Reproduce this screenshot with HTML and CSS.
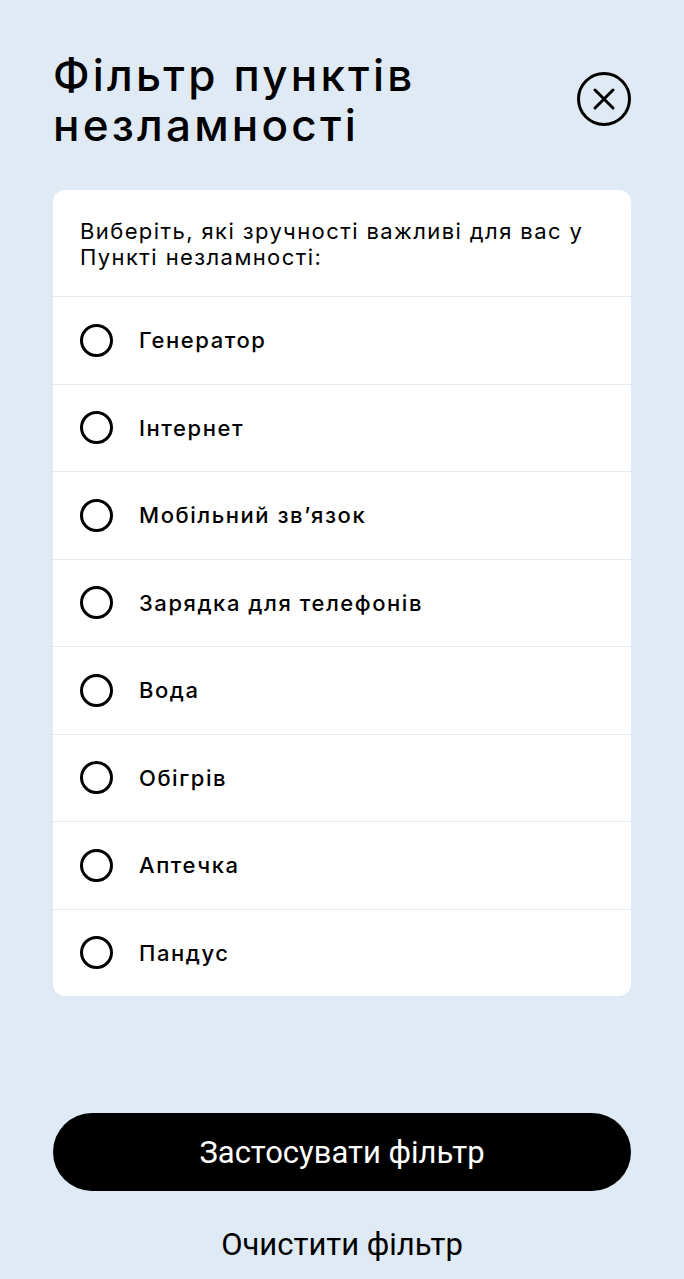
FILE: index.html
```html
<!DOCTYPE html>
<html lang="uk">
<head>
<meta charset="utf-8">
<title>Фільтр пунктів незламності</title>
<link rel="stylesheet" href="styles.css">
</head>
<body>
<div class="page">
  <header class="header">
    <h1 class="title">Фільтр пунктів незламності</h1>
    <button class="close" aria-label="Закрити">
      <svg width="54" height="54" viewBox="0 0 54 54" fill="none" stroke="#000" stroke-width="3" stroke-linecap="round">
        <circle cx="27" cy="27" r="25.5"/>
        <path d="M18 18 L36 36 M36 18 L18 36"/>
      </svg>
    </button>
  </header>

  <section class="card">
    <p class="intro">Виберіть, які зручності важливі для вас у Пункті незламності:</p>
    <ul class="options">
      <li class="option"><span class="radio"></span><span class="label">Генератор</span></li>
      <li class="option"><span class="radio"></span><span class="label">Інтернет</span></li>
      <li class="option"><span class="radio"></span><span class="label">Мобільний зв’язок</span></li>
      <li class="option"><span class="radio"></span><span class="label">Зарядка для телефонів</span></li>
      <li class="option"><span class="radio"></span><span class="label">Вода</span></li>
      <li class="option"><span class="radio"></span><span class="label">Обігрів</span></li>
      <li class="option"><span class="radio"></span><span class="label">Аптечка</span></li>
      <li class="option"><span class="radio"></span><span class="label">Пандус</span></li>
    </ul>
  </section>

  <footer class="footer">
    <button class="apply">Застосувати фільтр</button>
    <button class="clear">Очистити фільтр</button>
  </footer>
</div>
</body>
</html>
```

FILE: styles.css
```css
* { box-sizing: border-box; }
html, body {
  margin: 0;
  padding: 0;
  background: #dfeaf5;
}
body {
  font-family: Inter, "Noto Sans", "Liberation Sans", sans-serif;
  color: #000;
}
.page {
  min-height: 1279px;
  display: flex;
  flex-direction: column;
  padding: 0 53px;
}
.header {
  display: flex;
  align-items: flex-start;
  justify-content: space-between;
  padding-top: 50px;
}
.title {
  margin: 0;
  font-size: 44px;
  line-height: 50px;
  font-weight: 500;
  letter-spacing: 3.2px;
  width: 430px;
}
.close {
  margin: 22px 0 0 0;
  padding: 0;
  border: 0;
  background: none;
  width: 54px;
  height: 54px;
  display: block;
}
.close svg { display: block; }
.card {
  margin-top: 40px;
  background: #fff;
  border-radius: 12px;
  overflow: hidden;
}
.intro {
  margin: 0;
  padding: 28px 27px 26px;
  font-size: 22px;
  line-height: 26px;
  font-weight: 400;
  letter-spacing: 1.4px;
}
.options {
  list-style: none;
  margin: 0;
  padding: 0;
}
.option {
  display: flex;
  align-items: center;
  height: 87.5px;
  border-top: 1px solid #e2ebf2;
  padding-left: 27px;
}
.radio {
  width: 33px;
  height: 33px;
  border: 3px solid #000;
  border-radius: 50%;
  flex: none;
}
.label {
  margin-left: 26px;
  font-size: 22px;
  font-weight: 500;
  letter-spacing: 1.55px;
}
.footer {
  margin-top: auto;
  display: flex;
  flex-direction: column;
  align-items: center;
  padding-bottom: 10px;
}
.apply {
  width: 100%;
  height: 78px;
  border: 0;
  border-radius: 39px;
  background: #000;
  color: #fff;
  font-family: Roboto, "Liberation Sans", sans-serif;
  font-size: 31px;
  font-weight: 400;
}
.clear {
  margin-top: 30px;
  border: 0;
  background: none;
  color: #000;
  font-family: Roboto, "Liberation Sans", sans-serif;
  font-size: 31px;
  line-height: 48px;
  padding: 0;
}
```
